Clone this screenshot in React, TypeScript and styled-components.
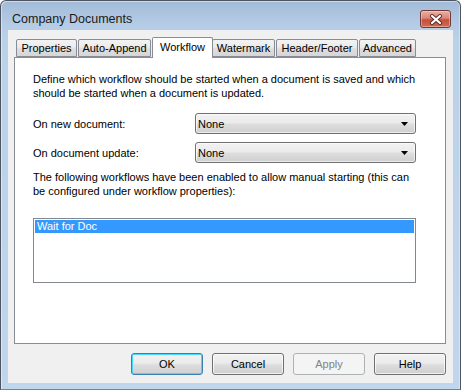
import type { FC } from 'react'
import styled, { createGlobalStyle } from 'styled-components'

const GlobalStyle = createGlobalStyle`
  html, body {
    margin: 0;
    padding: 0;
    background: #ffffff;
  }
  * {
    box-sizing: border-box;
  }
`

const tabs = [
  { label: 'Properties', width: 61 },
  { label: 'Auto-Append', width: 73 },
  { label: 'Workflow', width: 61 },
  { label: 'Watermark', width: 63 },
  { label: 'Header/Footer', width: 82 },
  { label: 'Advanced', width: 57 },
]

const buttons = [
  { label: 'OK', isDefault: true },
  { label: 'Cancel' },
  { label: 'Apply', disabled: true },
  { label: 'Help' },
]

const ArrowDown: FC = () => (
  <svg width="7" height="4" viewBox="0 0 7 4">
    <path d="M0 0 H7 L3.5 4 Z" fill="#000" />
  </svg>
)

const CloseGlyph: FC = () => (
  <svg width="14" height="11" viewBox="0 0 14 11">
    <path d="M3 2 L11 9 M11 2 L3 9" stroke="#5a2a22" strokeWidth="4" strokeLinecap="round" />
    <path d="M3 2 L11 9 M11 2 L3 9" stroke="#ffffff" strokeWidth="2.2" strokeLinecap="round" />
  </svg>
)

const App: FC = () => {
  const selected = 'Workflow'

  return (
    <>
      <GlobalStyle />
      <Window>
        <TitleBar>
          <Title>Company Documents</Title>
          <CloseButton>
            <CloseGlyph />
          </CloseButton>
        </TitleBar>
        <Client>
          <TabStrip>
            {tabs.map((tab) => (
              <Tab key={tab.label} $width={tab.width} $active={tab.label === selected}>
                {tab.label}
              </Tab>
            ))}
          </TabStrip>
          <Panel>
            <Paragraph>
              Define which workflow should be started when a document is saved and which should be started when a
              document is updated.
            </Paragraph>
            <FieldRow $top={13}>
              <FieldLabel>On new document:</FieldLabel>
              <Combo>
                <span>None</span>
                <ArrowDown />
              </Combo>
            </FieldRow>
            <FieldRow $top={8}>
              <FieldLabel>On document update:</FieldLabel>
              <Combo>
                <span>None</span>
                <ArrowDown />
              </Combo>
            </FieldRow>
            <Paragraph $top={7}>
              The following workflows have been enabled to allow manual starting (this can be configured under workflow
              properties):
            </Paragraph>
            <ListBox>
              <ListItem $selected>Wait for Doc</ListItem>
            </ListBox>
          </Panel>
          <ButtonRow>
            {buttons.map((b) => (
              <PushButton key={b.label} $isDefault={b.isDefault} disabled={b.disabled}>
                {b.label}
              </PushButton>
            ))}
          </ButtonRow>
        </Client>
      </Window>
    </>
  )
}

const uiFont = `'Liberation Sans', Arial, sans-serif`

const Window = styled.div`
  width: 461px;
  height: 390px;
  display: flex;
  flex-direction: column;
  border: 1px solid #4f5560;
  border-bottom: 1px solid #2aa0c4;
  border-radius: 6px 6px 0 0;
  background: linear-gradient(to bottom, #a2bbd8 0px, #b4cbe5 22px, #bad1ea 40px, #bfd6ed 100%);
  box-shadow: inset 1px 1px 0 rgba(255, 255, 255, 0.45), inset -1px 0 0 rgba(255, 255, 255, 0.35);
`

const TitleBar = styled.div`
  height: 29px;
  flex: none;
  display: flex;
  align-items: flex-start;
  justify-content: space-between;
  padding: 0 9px 0 11px;
`

const Title = styled.div`
  font-family: 'Liberation Sans', 'Noto Sans', sans-serif;
  font-size: 12.5px;
  color: #1a1a1a;
  line-height: 16px;
  margin-top: 10px;
`

const CloseButton = styled.div`
  width: 31px;
  height: 18px;
  margin-top: 9px;
  display: flex;
  align-items: center;
  justify-content: center;
  border: 1px solid #6f3a36;
  border-radius: 3px;
  background: linear-gradient(to bottom, #e8b1a6 0%, #d98575 45%, #c4503b 55%, #d06a52 100%);
  box-shadow: inset 0 0 0 1px rgba(255, 220, 210, 0.45);
`

const Client = styled.div`
  margin: 0 7px 0 7px;
  height: 353px;
  flex: none;
  display: flex;
  flex-direction: column;
  background: #f0f0f0;
  padding-top: 7px;
  font-family: ${uiFont};
  font-size: 11px;
  color: #000;
`

const TabStrip = styled.div`
  display: flex;
  align-items: flex-end;
  height: 20px;
  margin-left: 8px;
  position: relative;
  z-index: 2;
`

const Tab = styled.div<{ $width: number; $active?: boolean }>`
  width: ${({ $width }) => $width}px;
  height: ${({ $active }) => ($active ? 21 : 18)}px;
  margin-right: ${({ $active }) => ($active ? -1 : 1)}px;
  margin-bottom: ${({ $active }) => ($active ? -1 : 0)}px;
  display: flex;
  align-items: center;
  justify-content: center;
  padding-bottom: ${({ $active }) => ($active ? 2 : 0)}px;
  border: 1px solid #898c95;
  border-bottom: ${({ $active }) => ($active ? 'none' : '1px solid #898c95')};
  border-radius: 2px 2px 0 0;
  background: ${({ $active }) => ($active ? '#ffffff' : 'linear-gradient(to bottom, #f3f3f3 0%, #ebebeb 45%, #dedede 55%, #d6d6d6 100%)')};
  white-space: nowrap;
`

const Panel = styled.div`
  height: 287px;
  flex: none;
  margin: 0 7px 0 6px;
  border: 1px solid #898c95;
  background: #ffffff;
  padding: 14px 29px 0 18px;
  display: flex;
  flex-direction: column;
`

const Paragraph = styled.p<{ $top?: number }>`
  margin: ${({ $top }) => $top ?? 0}px 0 0 0;
  line-height: 14px;
`

const FieldRow = styled.div<{ $top: number }>`
  display: flex;
  align-items: center;
  margin-top: ${({ $top }) => $top}px;
`

const FieldLabel = styled.div`
  width: 162px;
  flex: none;
`

const Combo = styled.div`
  width: 221px;
  height: 21px;
  display: flex;
  align-items: center;
  justify-content: space-between;
  padding: 0 7px 0 2px;
  border: 1px solid #707070;
  border-radius: 3px;
  background: linear-gradient(to bottom, #f2f2f2 0%, #ebebeb 45%, #dddddd 55%, #cfcfcf 100%);
  box-shadow: inset 0 0 0 1px rgba(255, 255, 255, 0.6);
`

const ListBox = styled.div`
  margin-top: 20px;
  height: 65px;
  border: 1px solid #828790;
  padding: 1px;
`

const ListItem = styled.div<{ $selected?: boolean }>`
  height: 13px;
  line-height: 13px;
  padding-left: 2px;
  background: ${({ $selected }) => ($selected ? '#3399ff' : 'transparent')};
  color: ${({ $selected }) => ($selected ? '#ffffff' : '#000000')};
`

const ButtonRow = styled.div`
  display: flex;
  justify-content: flex-end;
  gap: 9px;
  padding: 9px 7px 0 0;
`

const PushButton = styled.button<{ $isDefault?: boolean }>`
  width: 72px;
  height: 22px;
  padding: 0;
  font-family: ${uiFont};
  font-size: 11px;
  color: #000;
  border: 1px solid ${({ $isDefault }) => ($isDefault ? '#3c7fb1' : '#707070')};
  border-radius: 3px;
  background: linear-gradient(to bottom, #f2f2f2 0%, #ebebeb 45%, #dddddd 55%, #cfcfcf 100%);
  box-shadow: ${({ $isDefault }) =>
    $isDefault ? 'inset 0 0 0 1px #48d8fb' : 'inset 0 0 0 1px rgba(255, 255, 255, 0.7)'};

  &:disabled {
    color: #838383;
    border-color: #adb2b5;
    background: #f4f4f4;
    box-shadow: none;
  }
`

export default App
